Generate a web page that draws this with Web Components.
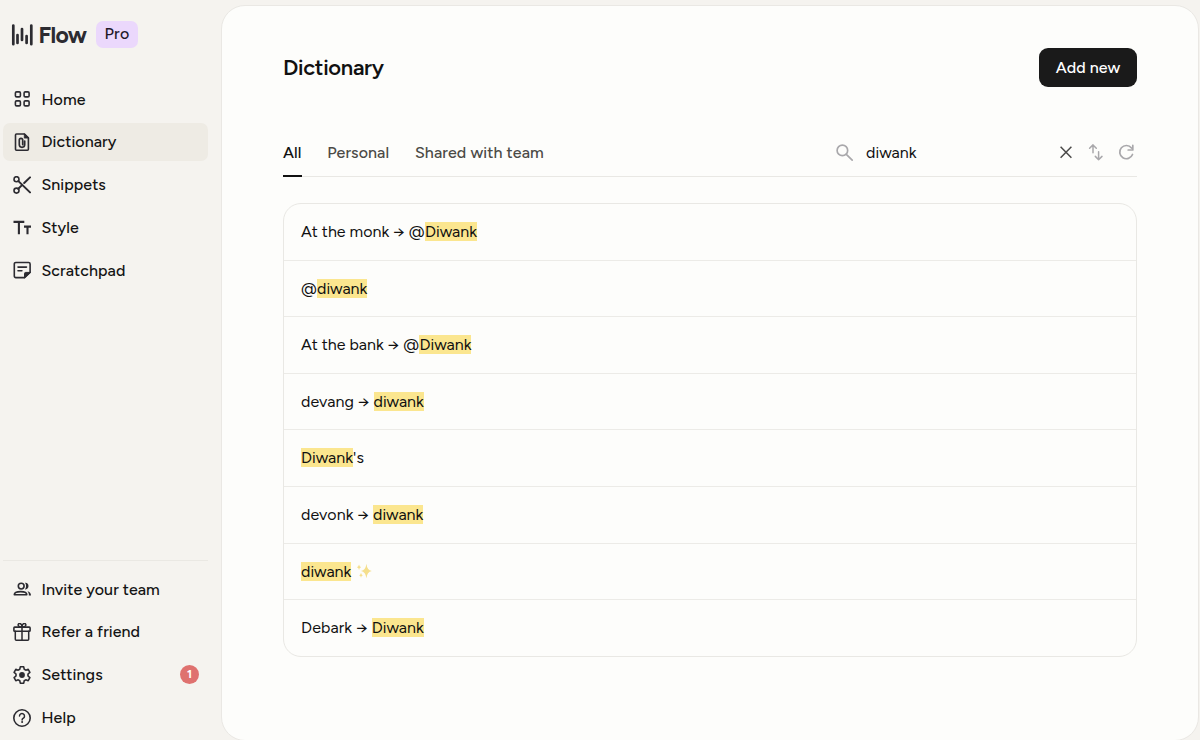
<!DOCTYPE html>
<html lang="en">
<head>
<meta charset="utf-8">
<title>Flow – Dictionary</title>
<style>
html,body{margin:0;height:100%;overflow:hidden;background:#f5f3ef}
body{font-family:Figtree,Inter,"Liberation Sans",sans-serif;font-size:16px;color:#111}
</style>
</head>
<body>
<flow-app></flow-app>
<script>
const define=(name,html,init)=>customElements.define(name,class extends HTMLElement{
  constructor(){super();this.attachShadow({mode:'open'});}
  connectedCallback(){
    if(this.shadowRoot.childNodes.length)return;
    const t=document.createElement('template');
    t.innerHTML=typeof html==='function'?html(this):html;
    this.shadowRoot.append(t.content.cloneNode(true));
    if(init)init(this);
  }
});

/* 18-unit icon set */
const icons={
  home:'<g stroke-width="1.6"><rect x="2.4" y="1.9" width="5" height="5" rx="1.2"/><rect x="11.1" y="1.9" width="5" height="5" rx="1.2"/><rect x="2.4" y="10.9" width="5" height="5" rx="1.2"/><rect x="11.1" y="10.9" width="5" height="5" rx="1.2"/></g>',
  dictionary:'<path d="M3.5 1h8l3.9 3.9v11.3a1 1 0 0 1-1 1H3.5a1 1 0 0 1-1-1V2a1 1 0 0 1 1-1z"/><path d="M11.3 1v4.1h4.1z" fill="currentColor" stroke-width=".8"/><path d="M11.7 8v3.6a2.7 2.7 0 0 1-5.4 0V7.1a1.7 1.7 0 0 1 3.4 0v4.5" stroke-width="1.7"/>',
  snippets:'<circle cx="3.5" cy="3.2" r="2.5"/><circle cx="3.5" cy="14.6" r="2.5"/><path d="M5.4 5.1 17 16.4M5.3 12.8l3.2-3.2M11.2 7 17 1.4" stroke-width="2"/>',
  style:'<path d="M.5 2.9h10.8M5.9 2.9v12.3M11 7.6h7M14.5 7.6v7.6" stroke-width="2.1" stroke-linecap="butt"/>',
  scratchpad:'<path d="M11.5 16.6H2.8a1.5 1.5 0 0 1-1.5-1.5V3a1.5 1.5 0 0 1 1.5-1.5h12.8a1.5 1.5 0 0 1 1.5 1.5v8.4z"/><path d="M11.5 16.6v-4a1.2 1.2 0 0 1 1.2-1.2h4.3z" fill="currentColor" stroke-width="1"/><path d="M5 6.1h8.5M5 9.8h3.9"/>',
  invite:'<g transform="translate(.2 .6)"><circle cx="8" cy="5.5" r="2.9"/><path d="M1.1 14.2c0-2 3-3.2 6.4-3.2s6.1 1.2 6.1 3.2z"/><path d="M11.8 2.2c4.7-.5 4.7 7.2 0 6.6 1.4-1.8 1.4-4.8 0-6.6zM14.2 10.6c2.4.6 3.6 1.9 3.6 4.2h-2.2c.2-1.7-.2-2.9-1.4-4.2z" fill="currentColor" stroke="none"/></g>',
  gift:'<rect x=".9" y="4.1" width="16.2" height="4.1" rx=".8"/><path d="M2.3 8.3v7.9q0 1 1 1h11.4q1 0 1-1V8.3M9 4.1v13.1M9 4C4.5 4.4 4.3.5 6.6.5 8.2.5 9 2.2 9 4c0-1.8.8-3.5 2.4-3.5C13.7.5 13.5 4.4 9 4" stroke-width="1.5"/>',
  settings:'<path d="M7.3.8h3.4l.5 2.4 1.6.95 2.4-.8 1.7 2.95-1.9 1.7v2l1.9 1.7-1.7 2.95-2.4-.8-1.6.95-.5 2.4H7.3l-.5-2.4-1.6-.95-2.4.8-1.7-2.95L3 10V8L1.1 6.3l1.7-2.95 2.4.8 1.6-.95z"/><circle cx="9" cy="9" r="2.9" fill="currentColor" stroke="none"/>',
  help:'<circle cx="9" cy="9" r="8.2"/><path d="M6.5 7.1a2.5 2.5 0 1 1 3.9 2.1c-.9.6-1.3 1-1.3 1.7" stroke-width="1.5"/><circle cx="9.1" cy="13.1" r="1" fill="currentColor" stroke="none"/>',
  search:'<circle cx="7" cy="7" r="5"/><path d="m10.7 10.7 5.6 5.5"/>',
  close:'<path d="M3.6 3.7 14.4 14.7M14.4 3.7 3.6 14.7" stroke-width="1.5" stroke-linecap="butt"/>',
  sort:'<path d="M6 9.8V2.1M2.6 5.3 6 1.9 9.3 5.3M11.6 8.8v7.9M8.3 13.4l3.3 3.3 3.4-3.3" stroke-width="1.5"/>',
  refresh:'<path d="M14.5 5A6.6 6.6 0 1 0 15.5 11.5" stroke-width="1.7"/><path d="M15.8 2.4v4.6h-4.6" stroke-width="1.7"/>',
  bars:'<g stroke-width="2.7"><path d="M2.3 1.5v18.7M6.5 11v8M11 5v11M15.6 12v7M20.3 1.5v18.7"/></g>',
  sparkle:'<g fill="#f5df8c" stroke="none"><path d="M11 .8q.7 6.7 5.7 7.7-5 1-5.7 7.7-.7-6.7-5.7-7.7 5-1 5.7-7.7z"/><path d="M3.2 1.6q.4 2.5 2.3 2.9-1.9.4-2.3 2.9-.4-2.5-2.3-2.9 1.9-.4 2.3-2.9zM5.3 10.4q.3 2.2 2 2.6-1.7.4-2 2.6-.3-2.2-2-2.6 1.7-.4 2-2.6z"/></g>'
};
define('ui-icon',el=>{const s=el.getAttribute('size')||18,v=el.getAttribute('name')==='bars'?22:18;
  return `<style>:host{display:block;flex:none;width:${s}px;height:${s}px}svg{display:block}</style><svg width="${s}" height="${s}" viewBox="0 0 ${v} ${v}" fill="none" stroke="currentColor" stroke-width="1.6" stroke-linecap="round" stroke-linejoin="round">${icons[el.getAttribute('name')]}</svg>`;});

/* Label tracked to a set measure, in pixels */
define('ui-text',`<style>:host{display:inline-block;white-space:pre}</style><span><slot></slot></span>`,el=>{
  const w=+el.getAttribute('w');
  const n=[...el.textContent].length,nat=el.getBoundingClientRect().width;
  el.style.letterSpacing=((w-nat)/n).toFixed(3)+'px';
  el.style.width=w+'px';
});

define('nav-item',el=>`<style>
:host{display:flex;align-items:center;box-sizing:border-box;height:38px;padding:0 9px 0 10px;border-radius:7px;font-weight:550;color:#141414}
:host([active]){background:#eeebe4}
ui-icon{color:#2c2b31;margin-right:10px}
ui-text{margin-bottom:.5px}
.count{margin-left:auto;width:19px;height:19px;border-radius:50%;background:#df716f;color:#fff;font-size:12px;font-weight:700;line-height:19px;text-align:center}
</style><ui-icon name="${el.getAttribute('icon')}"></ui-icon><ui-text w="${el.getAttribute('w')}">${el.getAttribute('label')}</ui-text>${el.hasAttribute('count')?`<span class="count">${el.getAttribute('count')}</span>`:''}`);

define('side-bar',`<style>
:host{display:flex;flex-direction:column;box-sizing:border-box;width:222px;height:740px;padding:21.3px 14px 3.5px 3.4px}
header{display:flex;align-items:center;height:26.5px;padding-left:7.5px;color:#2c2b31}
.name{font-size:23px;font-weight:700;margin-left:5.5px}
.pro{margin-left:auto;margin-right:70.5px;width:42px;height:26.5px;border-radius:7px;background:#ebd8fc;display:flex;align-items:center;justify-content:center;font-weight:550;color:#1f1828}
.pro ui-text{margin:0 0 1.5px 1px}
nav{display:grid;gap:4.75px;margin-top:32.5px}
footer{display:grid;gap:4.75px;margin-top:auto;border-top:1px solid #eae8e3;padding-top:9px}
</style>
<header><ui-icon name="bars" size="22"></ui-icon><ui-text class="name" w="48">Flow</ui-text><span class="pro"><ui-text w="25">Pro</ui-text></span></header>
<nav>
<nav-item icon="home" label="Home" w="44.3"></nav-item>
<nav-item icon="dictionary" label="Dictionary" w="75" active></nav-item>
<nav-item icon="snippets" label="Snippets" w="64.5"></nav-item>
<nav-item icon="style" label="Style" w="37.5"></nav-item>
<nav-item icon="scratchpad" label="Scratchpad" w="84"></nav-item>
</nav>
<footer>
<nav-item icon="invite" label="Invite your team" w="118.5"></nav-item>
<nav-item icon="gift" label="Refer a friend" w="98.7"></nav-item>
<nav-item icon="settings" label="Settings" w="61.3" count="1"></nav-item>
<nav-item icon="help" label="Help" w="34.5"></nav-item>
</footer>`);

define('tab-bar',`<style>
:host{display:flex;box-sizing:border-box;height:48.5px;border-bottom:1px solid #e9e8e4;color:#4b4a46;font-weight:550}
.tab{display:flex;align-items:center;box-sizing:border-box;height:48.5px;margin-right:25.7px;padding-top:2px;border-bottom:2px solid transparent}
.tab.on{color:#111;border-color:#111}
.find{margin-left:auto;display:flex;align-items:center;height:48.5px;width:302px;color:#a9a8ab;font-weight:400}
.find ui-text{color:#111;margin:0 auto 0 12px}
.find .x{color:#4b4a49}
.find ui-icon+ui-icon{margin-left:12px}
</style>
<div class="tab on"><ui-text w="18.5">All</ui-text></div><div class="tab"><ui-text w="62">Personal</ui-text></div><div class="tab"><ui-text w="129">Shared with team</ui-text></div>
<div class="find"><ui-icon name="search" size="19"></ui-icon><ui-text w="50.5">diwank</ui-text><ui-icon class="x" name="close"></ui-icon><ui-icon name="sort"></ui-icon><ui-icon name="refresh" style="margin-right:1.8px"></ui-icon></div>`);

define('word-mark',el=>`<style>:host{display:block;background:#fbe68f;height:19px;line-height:19px}</style><ui-text w="${el.getAttribute('w')}">${el.getAttribute('text')}</ui-text>`);
define('to-arrow',`<style>:host{display:block;width:19.5px;text-align:center;line-height:19px}</style>→`);
define('dict-row',`<style>:host{display:flex;align-items:center;box-sizing:border-box;padding:0 17px .6px;border-top:1px solid #ecebe7;line-height:19px}:host(:first-child){border-top-color:transparent}</style><slot></slot>`);
define('dict-list',`<style>
:host{display:grid;grid-template-rows:56px repeat(7,56.64px);box-sizing:border-box;height:454px;border:1px solid #e9e8e4;border-radius:18px;margin-top:26px;overflow:hidden}
</style><slot></slot>`);

define('flow-app',`<style>
:host{display:flex;width:1200px;height:740px;overflow:hidden}
main{box-sizing:border-box;width:978px;height:736px;margin-top:5px;margin-left:-1px;padding:42px 61px 0;background:#fdfdfb;border:1px solid #eae8e4;border-radius:24px}
.head{display:flex;align-items:center;justify-content:space-between;height:38.5px;margin-bottom:41.5px}
h1{margin:0;font-size:22px;font-weight:600;line-height:26px;padding-top:1px}
button{box-sizing:border-box;width:98px;height:38.5px;padding:0;border:0;border-radius:9px;background:#1a1a1a;color:#fff;font:inherit;font-weight:550}
</style>
<side-bar></side-bar>
<main>
<div class="head"><h1><ui-text w="100.7">Dictionary</ui-text></h1><button><ui-text w="64.5">Add new</ui-text></button></div>
<tab-bar></tab-bar>
<dict-list>
<dict-row><ui-text w="88.2">At the monk</ui-text><to-arrow></to-arrow><ui-text w="16.3">@</ui-text><word-mark text="Diwank" w="52"></word-mark></dict-row>
<dict-row><ui-text w="16">@</ui-text><word-mark text="diwank" w="50.3"></word-mark></dict-row>
<dict-row><ui-text w="82.7">At the bank</ui-text><to-arrow></to-arrow><ui-text w="16.3">@</ui-text><word-mark text="Diwank" w="52"></word-mark></dict-row>
<dict-row><ui-text w="53">devang</ui-text><to-arrow></to-arrow><word-mark text="diwank" w="50.3"></word-mark></dict-row>
<dict-row><word-mark text="Diwank" w="52"></word-mark><ui-text w="11.5">'s</ui-text></dict-row>
<dict-row><ui-text w="52.5">devonk</ui-text><to-arrow></to-arrow><word-mark text="diwank" w="50.3"></word-mark></dict-row>
<dict-row><word-mark text="diwank" w="50.3"></word-mark><ui-icon name="sparkle" size="17" style="margin-left:4.5px"></ui-icon></dict-row>
<dict-row><ui-text w="51.2">Debark</ui-text><to-arrow></to-arrow><word-mark text="Diwank" w="52"></word-mark></dict-row>
</dict-list>
</main>`);
</script>
</body>
</html>
